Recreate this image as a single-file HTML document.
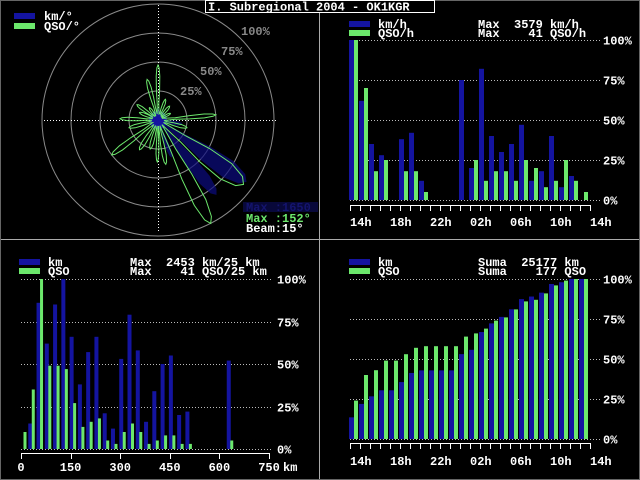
<!DOCTYPE html>
<html><head><meta charset="utf-8"><style>
html,body{margin:0;padding:0;background:#000;width:640px;height:480px;overflow:hidden}
svg{display:block}
text{font-family:"Liberation Mono",monospace;font-weight:bold;font-size:12px;white-space:pre}
</style></head><body>
<svg id="s" width="640" height="480" xmlns="http://www.w3.org/2000/svg">
<rect x="0" y="0" width="640" height="480" fill="#000"/>
<line x1="319.5" y1="12" x2="319.5" y2="480" stroke="#aaa"/>
<line x1="0" y1="239.5" x2="640" y2="239.5" stroke="#aaa"/>
<rect x="0.5" y="0.5" width="639" height="479" fill="none" stroke="#666"/>
<rect x="205.5" y="0.5" width="229" height="12" fill="#000" stroke="#fff"/>
<text x="208" y="10.5" fill="#fff" font-size="13">I. Subregional 2004 - OK1KGR</text>
<g id="polar"></g>
<g id="charts"></g>
</svg>
<script>
var NS="http://www.w3.org/2000/svg";
var G="#6ce86c",B="#1414a0";
function el(p,t,a,txt){var e=document.createElementNS(NS,t);for(var k in a)e.setAttribute(k,a[k]);if(txt!==undefined)e.textContent=txt;p.appendChild(e);return e;}
var P=document.getElementById('polar'),C=document.getElementById('charts');
var cx=158,cy=120;
[29,58,87,116].forEach(function(r){el(P,'circle',{cx:cx,cy:cy,r:r,fill:'none',stroke:'#8a8a8a','stroke-width':1});});
el(P,'line',{x1:cx+0.5,y1:5,x2:cx+0.5,y2:233,stroke:'#fff','stroke-dasharray':'1 2'});
el(P,'line',{x1:44,y1:cy+0.5,x2:276,y2:cy+0.5,stroke:'#fff','stroke-dasharray':'1 2'});
[['100%',241,35],['75%',221,55],['50%',200,75],['25%',180,95]].forEach(function(t){el(P,'text',{x:t[1],y:t[2],fill:'#888'},t[0]);});
function pt(a,r){var t=a*Math.PI/180;return (cx+r*Math.sin(t)).toFixed(1)+','+(cy-r*Math.cos(t)).toFixed(1);}
function petals(list,base){list.sort(function(a,b){return a[0]-b[0];});var pts=[];
 for(var i=0;i<list.length;i++){var a=list[i][0],r=list[i][1],w=list[i][2]||3;
  var prev=list[(i-1+list.length)%list.length][0];var mid=i==0?(prev-360+a)/2:(prev+a)/2;
  pts.push(pt(mid,base));
  pts.push(pt(a-w*0.9,r*0.3));pts.push(pt(a-w,r*0.55));pts.push(pt(a-w*0.8,r*0.8));pts.push(pt(a-w*0.4,r*0.95));pts.push(pt(a,r));
  pts.push(pt(a+w*0.4,r*0.95));pts.push(pt(a+w*0.8,r*0.8));pts.push(pt(a+w,r*0.55));pts.push(pt(a+w*0.9,r*0.3));}
 return pts.join(' ');}
el(P,'polygon',{points:petals([[125,108,8],[142,95,6],[160,40,5],[0,12,12],[100,25,8]],8),fill:'#0c0c80',opacity:0.7});
el(P,'circle',{cx:cx,cy:cy,r:9,fill:B});
el(P,'polygon',{points:petals([[0,55,3],[345,42,4],[20,22,5],[40,18,6],[62,14,6],[85,58,3],[105,30,5],[127,107,8],[153,116,5],[170,45,4],[181,42,3],[195,30,5],[212,35,5],[233,58,4],[255,30,5],[272,38,4],[292,20,6],[306,26,5],[325,15,6]],6),fill:'none',stroke:G,'stroke-width':1});
el(P,'rect',{x:14,y:13,width:21,height:6,fill:B});
el(P,'rect',{x:14,y:23,width:21,height:6,fill:G});
el(P,'text',{x:44,y:20,fill:'#fff'},'km/°');
el(P,'text',{x:44,y:30,fill:'#fff'},'QSO/°');
el(P,'rect',{x:243,y:202,width:75,height:10,fill:'#08083a'});
el(P,'text',{x:246,y:211,fill:'#14146e'},'Max :1650');
el(P,'text',{x:246,y:222,fill:G},'Max :152°');
el(P,'text',{x:246,y:232,fill:'#fff'},'Beam:15°');

function grid(xs,xe,y0,y100,lx){var lab=['0%','25%','50%','75%','100%'];
 for(var i=0;i<5;i++){var y=Math.round(y0-(y0-y100)*i/4)+0.5;
  el(C,'line',{x1:xs,y1:y,x2:xe,y2:y,stroke:'#bbb','stroke-dasharray':'1 2'});
  el(C,'text',{x:lx,y:y+4,fill:'#fff'},lab[i]);}}
function bars(vals,x0,step,off,w,y0,y100,col){vals.forEach(function(v,i){if(v==null)return;var h=(y0-y100)*v/100;
 if(h<1){return;}
 el(C,'rect',{x:x0+step*i+off,y:y0-h,width:w,height:h,fill:col});});}
function hourAxis(ya,yl){el(C,'line',{x1:350,y1:ya+0.5,x2:590,y2:ya+0.5,stroke:'#fff'});
 for(var i=0;i<=24;i++){el(C,'line',{x1:350.5+i*10,y1:ya,x2:350.5+i*10,y2:ya+6,stroke:'#fff'});}
 ['14h','18h','22h','02h','06h','10h','14h'].forEach(function(t,i){el(C,'text',{x:350+i*40,y:yl,fill:'#fff'},t);});}
function legend(x,y,t1,t2,m1,m2,mx){el(C,'rect',{x:x,y:y,width:21,height:6,fill:B});el(C,'rect',{x:x,y:y+9,width:21,height:6,fill:G});
 el(C,'text',{x:x+29,y:y+7,fill:'#fff'},t1);el(C,'text',{x:x+29,y:y+16,fill:'#fff'},t2);
 el(C,'text',{x:mx,y:y+7,fill:'#fff'},m1);el(C,'text',{x:mx,y:y+16,fill:'#fff'},m2);}

var tb=[100,62,35,28,0,38,42,12,0,0,0,75,20,82,40,30,35,47,12,18,40,8,15,0];
var tg=[100,70,18,25,0,18,18,5,0,0,0,0,25,12,18,18,12,25,20,8,12,25,12,5];
grid(350,600,200,40,603);
bars(tb,349,10,0,5,200,40,B);bars(tg,349,10,5,4,200,40,G);
hourAxis(205,226);
legend(349,21,'km/h','QSO/h','Max  3579 km/h','Max    41 QSO/h',478);

var cg=[24,40,43,49,49,53,57,58,58,58,58,64,66,69,74,76,81,86,87,91,96,99,100,100];
var sum=0,tot=tb.reduce(function(a,b){return a+b;},0),cb=tb.map(function(v){sum+=v;return sum/tot*100;});
grid(350,600,439,279,603);
bars(cb,349,10,0,5,439,279,B);bars(cg,349,10,5,4,439,279,G);
hourAxis(443,465);
legend(349,259,'km','QSO','Suma  25177 km','Suma    177 QSO',478);

var bb=[0,15,86,62,85,100,66,38,57,66,21,12,53,79,58,16,34,50,55,20,22,0,0,0,0,52,0,0,0,0];
var bg=[10,35,100,49,49,47,27,13,16,18,5,3,10,15,10,3,5,8,8,3,3,0,0,0,0,5,0,0,0,0];
grid(21,273,449,279,277);
bars(bb,21,8.27,-1,4,449,279,B);bars(bg,21,8.27,2.5,3,449,279,G);
el(C,'line',{x1:21,y1:453.5,x2:269,y2:453.5,stroke:'#fff'});
[0,150,300,450,600,750].forEach(function(k,i){var x=21+k*248/750;el(C,'line',{x1:Math.round(x)+0.5,y1:453,x2:Math.round(x)+0.5,y2:459,stroke:'#fff'});
 el(C,'text',{x:x,y:471,fill:'#fff','text-anchor':'middle'},String(k));});
el(C,'text',{x:283,y:471,fill:'#fff'},'km');
legend(19,259,'km','QSO','Max  2453 km/25 km','Max    41 QSO/25 km',130);
</script>
</body></html>
